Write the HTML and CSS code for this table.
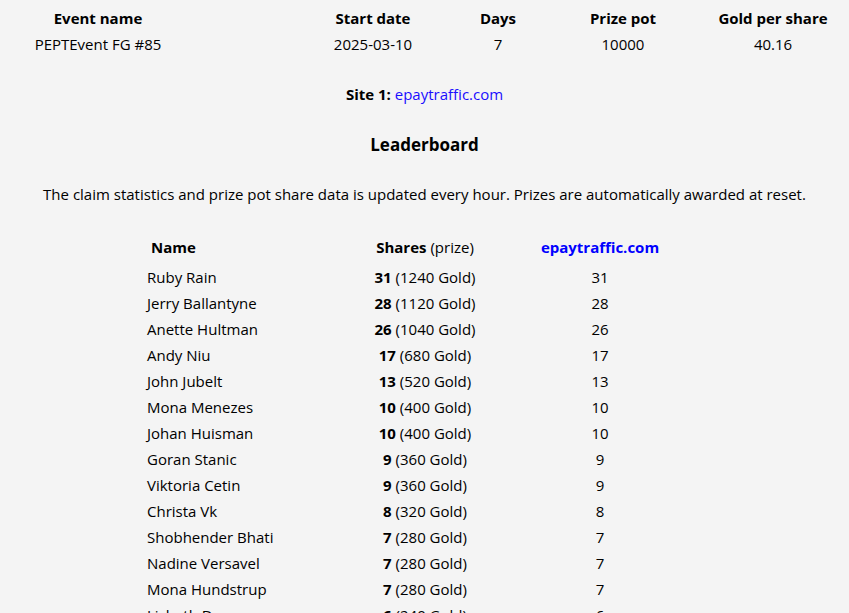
FILE: index.html
```html
<!DOCTYPE html>
<html>
<head>
<meta charset="utf-8">
<link rel="stylesheet" href="styles.css">
</head>
<body>
<div class="event">
  <div class="cell c1 th">Event name</div>
  <div class="cell c2 th">Start date</div>
  <div class="cell c3 th">Days</div>
  <div class="cell c4 th">Prize pot</div>
  <div class="cell c5 th">Gold per share</div>
  <div class="cell c1">PEPTEvent FG #85</div>
  <div class="cell c2">2025-03-10</div>
  <div class="cell c3">7</div>
  <div class="cell c4">10000</div>
  <div class="cell c5">40.16</div>
</div>
<p class="site"><b>Site 1:</b> <a href="#">epaytraffic.com</a></p>
<h3 class="title">Leaderboard</h3>
<p class="note">The claim statistics and prize pot share data is updated every hour. Prizes are automatically awarded at reset.</p>
<table class="board">
  <thead>
    <tr><th class="name">Name</th><th>Shares <span class="light">(prize)</span></th><th class="site-col">epaytraffic.com</th></tr>
  </thead>
  <tbody>
    <tr><td class="name">Ruby Rain</td><td><b>31</b> (1240 Gold)</td><td>31</td></tr>
    <tr><td class="name">Jerry Ballantyne</td><td><b>28</b> (1120 Gold)</td><td>28</td></tr>
    <tr><td class="name">Anette Hultman</td><td><b>26</b> (1040 Gold)</td><td>26</td></tr>
    <tr><td class="name">Andy Niu</td><td><b>17</b> (680 Gold)</td><td>17</td></tr>
    <tr><td class="name">John Jubelt</td><td><b>13</b> (520 Gold)</td><td>13</td></tr>
    <tr><td class="name">Mona Menezes</td><td><b>10</b> (400 Gold)</td><td>10</td></tr>
    <tr><td class="name">Johan Huisman</td><td><b>10</b> (400 Gold)</td><td>10</td></tr>
    <tr><td class="name">Goran Stanic</td><td><b>9</b> (360 Gold)</td><td>9</td></tr>
    <tr><td class="name">Viktoria Cetin</td><td><b>9</b> (360 Gold)</td><td>9</td></tr>
    <tr><td class="name">Christa Vk</td><td><b>8</b> (320 Gold)</td><td>8</td></tr>
    <tr><td class="name">Shobhender Bhati</td><td><b>7</b> (280 Gold)</td><td>7</td></tr>
    <tr><td class="name">Nadine Versavel</td><td><b>7</b> (280 Gold)</td><td>7</td></tr>
    <tr><td class="name">Mona Hundstrup</td><td><b>7</b> (280 Gold)</td><td>7</td></tr>
    <tr><td class="name">Lisbeth Dam</td><td><b>6</b> (240 Gold)</td><td>6</td></tr>
  </tbody>
</table>
</body>
</html>
```
FILE: styles.css
```css
html, body {
  margin: 0;
  padding: 0;
  background: #f4f4f4;
}
body {
  font-family: "Open Sans", "Noto Sans", sans-serif;
  font-size: 15px;
  color: #000;
  padding-top: 5px;
}
.event {
  display: grid;
  grid-template-columns: 8px 180px 140px 90px 40px 80px 35px 100px 30px 140px;
  grid-auto-rows: 26px;
}
.cell {
  text-align: center;
  line-height: 26px;
  white-space: nowrap;
}
.th { font-weight: 700; }
.c1 { grid-column: 2; }
.c2 { grid-column: 4; }
.c3 { grid-column: 6; }
.c4 { grid-column: 8; }
.c5 { grid-column: 10; }
.site {
  margin: 26px 0 0;
  text-align: center;
  line-height: 22px;
}
.site a { color: #1a0dff; text-decoration: none; }
.title {
  margin: 29px 0 0;
  text-align: center;
  font-size: 17px;
  line-height: 22px;
}
.note {
  margin: 27px 0 0;
  text-align: center;
  line-height: 22px;
}
.board {
  margin: 31px auto 0;
  border-collapse: separate;
  border-spacing: 0;
  width: 563px;
}
.board th, .board td {
  text-align: center;
  height: 26px;
  padding: 0;
  white-space: nowrap;
}
.board thead th { height: 28px; vertical-align: top; line-height: 22px; }
.board th.name { text-align: left; padding-left: 8px; width: 205px; }
.board td.name { text-align: left; padding-left: 4px; width: 209px; }
.board th:nth-child(2), .board td:nth-child(2) { width: 138px; }
.light { font-weight: 400; }
.site-col { color: #0000ff; }
```
